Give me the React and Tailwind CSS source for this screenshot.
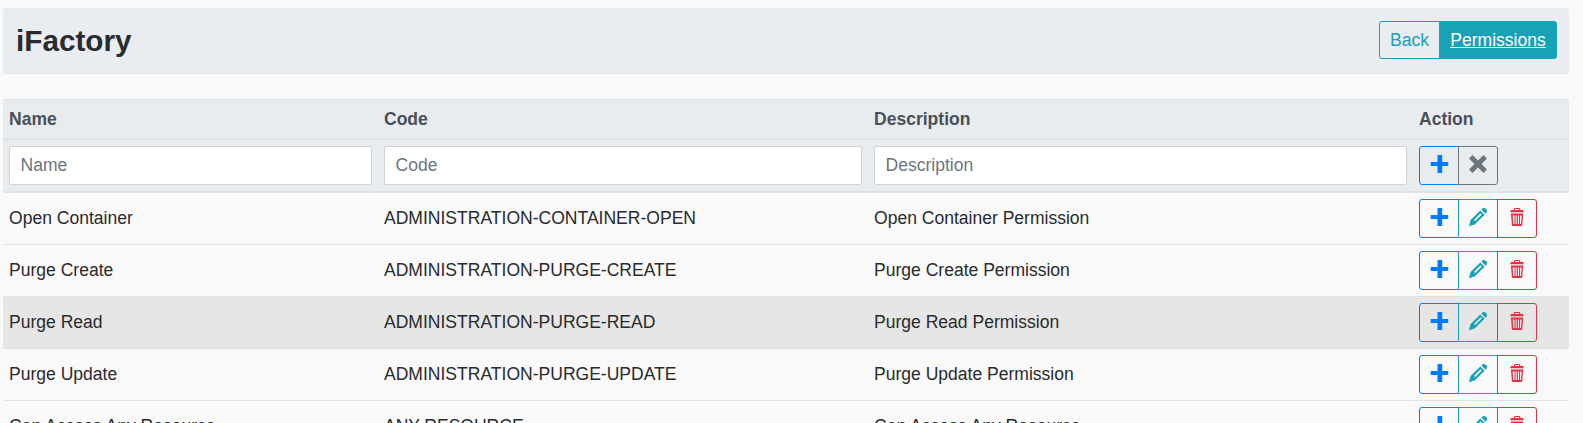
const COLS = 'grid grid-cols-[375px_490px_545px_156px]';

const ROWS = [
  ['Open Container', 'ADMINISTRATION-CONTAINER-OPEN', 'Open Container Permission'],
  ['Purge Create', 'ADMINISTRATION-PURGE-CREATE', 'Purge Create Permission'],
  ['Purge Read', 'ADMINISTRATION-PURGE-READ', 'Purge Read Permission'],
  ['Purge Update', 'ADMINISTRATION-PURGE-UPDATE', 'Purge Update Permission'],
  ['Can Access Any Resource', 'ANY-RESOURCE', 'Can Access Any Resource'],
];

function Icon({ children }) {
  return (
    <svg width="20" height="20" viewBox="0 0 20 20" fill="currentColor" className="-mt-[3px] block">
      {children}
    </svg>
  );
}

const PlusIcon = () => (
  <Icon>
    <path d="M8.500 1h4.700v7h6v4h-6v7H8.500v-7H1.700V8h6.800z" />
  </Icon>
);

const CrossIcon = () => (
  <Icon>
    <path d="M4.500 1 10 6.500 15.500 1 19 4.500 13.500 10l5.500 5.500-3.500 3.500-5.500-5.500L4.500 19 1 15.500 6.500 10 1 4.500z" />
  </Icon>
);

const PencilIcon = () => (
  <Icon>
    <path
      fillRule="evenodd"
      d="M12.300 3.400 16.600 7.700 6.600 17.400 1 19.200 2.600 13.100zM12.600 6.300 6 12.900 7.200 14.100 13.800 7.500z"
    />
    <path d="M13.300 2.500 14.700 1.300Q16.300.300 17.800 1.700L18.400 2.300Q19.700 3.900 18.700 5.300L17.500 6.700z" />
  </Icon>
);

const TrashIcon = () => (
  <Icon>
    <path
      fillRule="evenodd"
      d="M6.900 3V2Q6.900 1 7.900 1h4.400q1 0 1 1v1h2.300q1 0 1 1v1.300H3.400V4q0-1 1-1zM8.100 3h4V2.100h-4z"
    />
    <path
      fillRule="evenodd"
      d="M3.900 6.500h12.400L15.300 18q-.1 1-1.100 1H6q-1 0-1.100-1zM5.700 8.500 6.300 17h1.200V8.500zM8.600 8.500V17h1.100V8.500zM10.900 8.500V17h1.100V8.500zM13.100 8.500V17h1l.6-8.500z"
    />
  </Icon>
);

function IconButton({ className, label, children }) {
  return (
    <button aria-label={label} className={`flex h-[39px] w-10 items-center justify-center border ${className}`}>
      {children}
    </button>
  );
}

function Field({ label }) {
  return (
    <div className="px-1.5">
      <input
        placeholder={label}
        className="block h-[39px] w-full rounded-[2px] border border-[#ced4da] bg-white px-[10.5px] placeholder:text-[#6c757d]"
      />
    </div>
  );
}

export default function App() {
  return (
    <div className="h-[423px] overflow-hidden bg-[#f9f9f9] pt-2 pl-[3px] font-['Liberation_Sans',Arial,sans-serif] text-[17.55px] leading-[26px] text-[#292b2c]">
      <header className="flex h-[66px] w-[1566px] items-start justify-between rounded-[3px] border-b border-[#dbe0e4] bg-[#e9ecf1] pt-[13px] pr-3 pl-[13px]">
        <h1 className="mt-0.5 text-[29.700px] leading-9 font-bold">iFactory</h1>
        <div className="flex h-[38px]">
          <button className="w-[61px] rounded-l-[3px] border border-[#17a2b8] text-[#17a2b8]">Back</button>
          <button className="-ml-px w-[118px] rounded-r-[3px] border border-[#17a2b8] bg-[#17a2b8] text-white underline">
            Permissions
          </button>
        </div>
      </header>

      <main className="mt-[25px] w-[1566px]">
        <div className="border-t border-[#dee2e6] bg-[#e9ecef] font-bold text-[#495057]">
          <div className={`${COLS} h-10 items-center border-b-2 border-[#dee2e6]`}>
            <div className="px-1.5">Name</div>
            <div className="px-1.5">Code</div>
            <div className="px-1.5">Description</div>
            <div className="px-1.5">Action</div>
          </div>
          <div className={`${COLS} border-b-2 border-[#dee2e6] py-1.5 font-normal`}>
            <Field label="Name" />
            <Field label="Code" />
            <Field label="Description" />
            <div className="flex px-1.5">
              <IconButton label="Add" className="rounded-l-[3px] border-[#007bff] text-[#007bff]"><PlusIcon /></IconButton>
              <IconButton label="Clear" className="-ml-px rounded-r-[3px] border-[#6c757d] text-[#6c757d]"><CrossIcon /></IconButton>
            </div>
          </div>
        </div>

        {ROWS.map(([name, code, description], i) => (
          <div key={name} className={`${COLS} h-[52px] items-center border-b border-[#dee2e6] ${i === 2 ? 'bg-[#e6e6e6]' : ''}`}>
            <div className="px-1.5 pb-px">{name}</div>
            <div className="px-1.5 pb-px">{code}</div>
            <div className="px-1.5 pb-px">{description}</div>
            <div className="flex px-1.5">
              <IconButton label="Add" className="rounded-l-[3px] border-[#007bff] text-[#007bff]"><PlusIcon /></IconButton>
              <IconButton label="Edit" className="-ml-px border-[#17a2b8] text-[#17a2b8]"><PencilIcon /></IconButton>
              <IconButton label="Delete" className="-ml-px rounded-r-[3px] border-[#dc3545] text-[#dc3545]"><TrashIcon /></IconButton>
            </div>
          </div>
        ))}
      </main>
    </div>
  );
}
